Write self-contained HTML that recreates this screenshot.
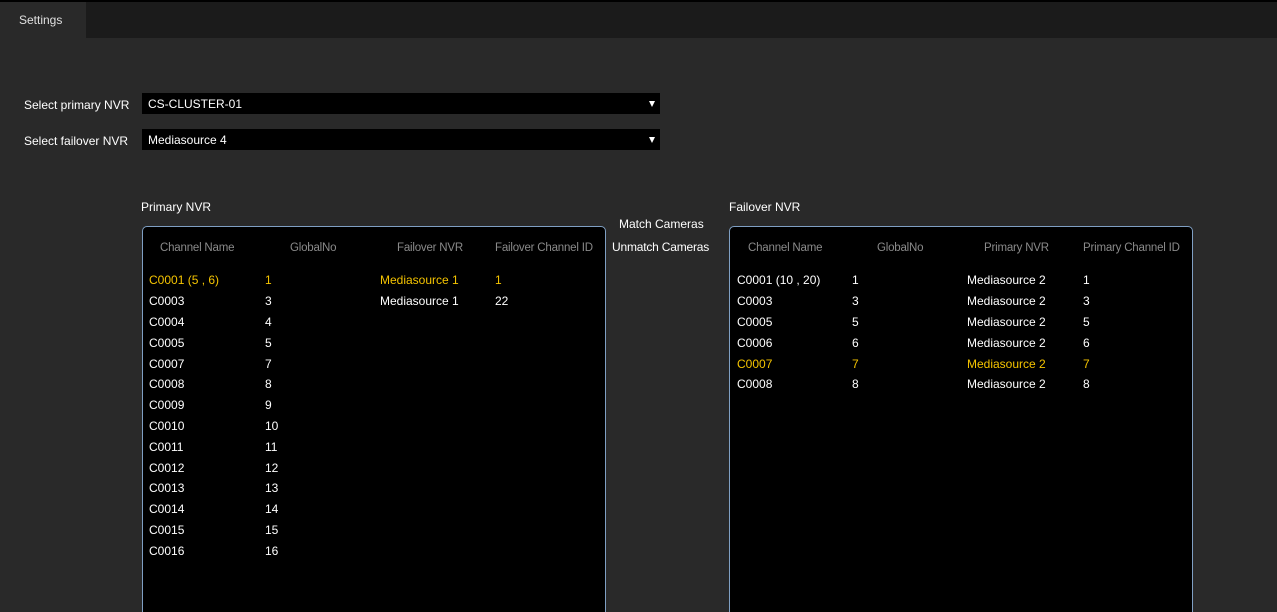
<!DOCTYPE html>
<html style="width:1277px;height:612px;overflow:hidden"><head><meta charset="utf-8"><style>
*{margin:0;padding:0;box-sizing:border-box}
body{width:1277px;height:612px;background:#292929;font-family:"Liberation Sans",Arial,sans-serif;font-size:12px;color:#fff;position:relative;overflow:hidden}
.a{position:absolute;white-space:nowrap;line-height:14px}
.top{position:absolute;left:0;top:0;width:1277px;height:2px;background:#000}
.bar{position:absolute;left:0;top:2px;width:1277px;height:36px;background:#1b1b1b}
.tab{position:absolute;left:0;top:2px;width:86px;height:36px;background:#292929}
.sel{position:absolute;left:142px;width:518px;height:21px;background:#000;color:#fff;padding-left:6px;line-height:22px}
.sel:after{content:"";position:absolute;right:5px;top:8px;border-left:3px solid transparent;border-right:3px solid transparent;border-top:6px solid #fff}
.panel{position:absolute;top:226px;height:400px;width:464px;background:#000;border:1.5px solid #7f9fc3;border-radius:5px}
.h{color:#8a8a8a;font-size:11.5px;letter-spacing:-0.2px}
.y{color:#f5c400}
</style></head><body>
<div class="top"></div><div class="bar"></div><div class="tab"></div>
<div class="a" style="left:19px;top:13px;color:#e0e0e0">Settings</div>
<div class="a" style="left:24px;top:98px">Select primary NVR</div>
<div class="sel" style="top:93px">CS-CLUSTER-01</div>
<div class="a" style="left:24px;top:134px">Select failover NVR</div>
<div class="sel" style="top:129px">Mediasource 4</div>
<div class="a" style="left:141px;top:200px">Primary NVR</div>
<div class="a" style="left:729px;top:200px">Failover NVR</div>
<div class="a" style="left:619px;top:217px">Match Cameras</div>
<div class="a" style="left:612px;top:240px;letter-spacing:-0.2px">Unmatch Cameras</div>
<div class="panel" style="left:142px"></div>
<div class="panel" style="left:729px"></div>
<div class="a h" style="left:160px;top:241px">Channel Name</div>
<div class="a h" style="left:290px;top:241px">GlobalNo</div>
<div class="a h" style="left:397px;top:241px">Failover NVR</div>
<div class="a h" style="left:495px;top:241px">Failover Channel ID</div>
<div class="a h" style="left:748px;top:241px">Channel Name</div>
<div class="a h" style="left:877px;top:241px">GlobalNo</div>
<div class="a h" style="left:984px;top:241px">Primary NVR</div>
<div class="a h" style="left:1083px;top:241px">Primary Channel ID</div>
<div class="a y" style="left:149px;top:273px">C0001 (5 , 6)</div><div class="a y" style="left:265px;top:273px">1</div><div class="a y" style="left:380px;top:273px">Mediasource 1</div><div class="a y" style="left:495px;top:273px">1</div>
<div class="a" style="left:149px;top:294px">C0003</div><div class="a" style="left:265px;top:294px">3</div><div class="a" style="left:380px;top:294px">Mediasource 1</div><div class="a" style="left:495px;top:294px">22</div>
<div class="a" style="left:149px;top:315px">C0004</div><div class="a" style="left:265px;top:315px">4</div>
<div class="a" style="left:149px;top:336px">C0005</div><div class="a" style="left:265px;top:336px">5</div>
<div class="a" style="left:149px;top:357px">C0007</div><div class="a" style="left:265px;top:357px">7</div>
<div class="a" style="left:149px;top:377px">C0008</div><div class="a" style="left:265px;top:377px">8</div>
<div class="a" style="left:149px;top:398px">C0009</div><div class="a" style="left:265px;top:398px">9</div>
<div class="a" style="left:149px;top:419px">C0010</div><div class="a" style="left:265px;top:419px">10</div>
<div class="a" style="left:149px;top:440px">C0011</div><div class="a" style="left:265px;top:440px">11</div>
<div class="a" style="left:149px;top:461px">C0012</div><div class="a" style="left:265px;top:461px">12</div>
<div class="a" style="left:149px;top:481px">C0013</div><div class="a" style="left:265px;top:481px">13</div>
<div class="a" style="left:149px;top:502px">C0014</div><div class="a" style="left:265px;top:502px">14</div>
<div class="a" style="left:149px;top:523px">C0015</div><div class="a" style="left:265px;top:523px">15</div>
<div class="a" style="left:149px;top:544px">C0016</div><div class="a" style="left:265px;top:544px">16</div>
<div class="a" style="left:737px;top:273px">C0001 (10 , 20)</div><div class="a" style="left:852px;top:273px">1</div><div class="a" style="left:967px;top:273px">Mediasource 2</div><div class="a" style="left:1083px;top:273px">1</div>
<div class="a" style="left:737px;top:294px">C0003</div><div class="a" style="left:852px;top:294px">3</div><div class="a" style="left:967px;top:294px">Mediasource 2</div><div class="a" style="left:1083px;top:294px">3</div>
<div class="a" style="left:737px;top:315px">C0005</div><div class="a" style="left:852px;top:315px">5</div><div class="a" style="left:967px;top:315px">Mediasource 2</div><div class="a" style="left:1083px;top:315px">5</div>
<div class="a" style="left:737px;top:336px">C0006</div><div class="a" style="left:852px;top:336px">6</div><div class="a" style="left:967px;top:336px">Mediasource 2</div><div class="a" style="left:1083px;top:336px">6</div>
<div class="a y" style="left:737px;top:357px">C0007</div><div class="a y" style="left:852px;top:357px">7</div><div class="a y" style="left:967px;top:357px">Mediasource 2</div><div class="a y" style="left:1083px;top:357px">7</div>
<div class="a" style="left:737px;top:377px">C0008</div><div class="a" style="left:852px;top:377px">8</div><div class="a" style="left:967px;top:377px">Mediasource 2</div><div class="a" style="left:1083px;top:377px">8</div>
</body></html>
